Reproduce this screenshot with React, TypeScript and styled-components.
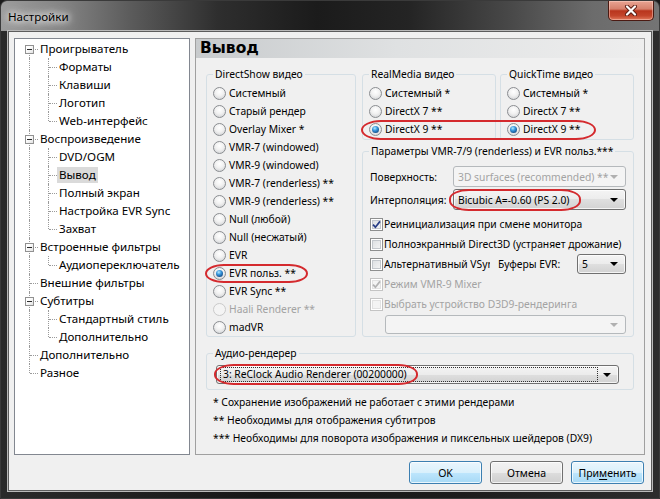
import styled, { createGlobalStyle } from 'styled-components';

const FONT = `"Noto Sans", "Liberation Sans", sans-serif`;

const GlobalStyle = createGlobalStyle`
  html, body {
    margin: 0;
    padding: 0;
    background: #1b1b1b;
  }
  body {
    font-family: ${FONT};
    font-size: 10.3px;
    color: #000;
  }
  * {
    box-sizing: border-box;
  }
`;

const Window = styled.div`
  width: 660px;
  height: 499px;
  display: flex;
  flex-direction: column;
  background: linear-gradient(90deg, #2a2a2a 0%, #161616 40%, #1c1c1c 70%, #2c2c2c 100%);
  border: 1px solid #3a3a3a;
  border-radius: 7px 7px 0 0;
  overflow: hidden;
`;

const TitleBar = styled.div`
  height: 30px;
  flex: none;
  display: flex;
  align-items: flex-start;
  padding-left: 7px;
  background: linear-gradient(
    90deg,
    #9c9c9c 0%,
    #858585 9%,
    #5a5a5a 20%,
    #2e2e2e 33%,
    #1b1b1b 48%,
    #242424 62%,
    #4a4a4a 78%,
    #6c6c6c 90%,
    #747474 100%
  );
`;

const Title = styled.span`
  margin-top: 8px;
  font-size: 11.6px;
  color: #000;
  text-shadow: 0 0 6px #fff, 0 0 10px #fff, 0 0 14px rgba(255, 255, 255, 0.8);
`;

const CloseButton = styled.div`
  margin-left: auto;
  margin-right: 5px;
  width: 46px;
  height: 20px;
  display: flex;
  align-items: center;
  justify-content: center;
  border: 1px solid #4b1a12;
  border-top: none;
  border-radius: 0 0 5px 5px;
  background: linear-gradient(#e9a493 0%, #d6806c 42%, #b9351d 52%, #c3452b 78%, #e27a5d 100%);
  box-shadow: inset 0 0 0 1px rgba(255, 220, 210, 0.45);
`;

const Client = styled.div`
  flex: 1;
  min-height: 0;
  margin: 0 7px 7px;
  display: flex;
  flex-direction: column;
  gap: 6px;
  padding: 6px 7px 6px 5px;
  background: #f0f0f0;
  border: 1px solid #5c5c5c;
  box-shadow: 0 0 0 1px #b9b9b9;
`;

const Main = styled.div`
  flex: 1;
  min-height: 0;
  display: flex;
  gap: 5px;
`;

/* ---------- tree ---------- */

const Tree = styled.div`
  width: 176px;
  flex: none;
  padding: 1px 0 0 4px;
  font-size: 11.6px;
  background: #fff;
  border: 1px solid #828790;
`;

const TreeRow = styled.div`
  display: flex;
  align-items: center;
  height: 18px;
  white-space: nowrap;
`;

type Line = 'full' | 'top' | 'bottom' | 'none';

const Gutter = styled.span<{ $v: Line; $h?: boolean }>`
  position: relative;
  width: 19px;
  height: 18px;
  flex: none;
  &::before {
    content: '';
    display: ${(p) => (p.$v === 'none' ? 'none' : 'block')};
    position: absolute;
    left: 10px;
    top: ${(p) => (p.$v === 'bottom' ? '9px' : '0')};
    bottom: ${(p) => (p.$v === 'top' ? '9px' : '0')};
    border-left: 1px dotted #9a9a9a;
  }
  &::after {
    content: '';
    display: ${(p) => (p.$h ? 'block' : 'none')};
    position: absolute;
    left: 11px;
    top: 9px;
    width: 8px;
    border-top: 1px dotted #9a9a9a;
  }
`;

const ExpandBox = styled.span`
  position: absolute;
  z-index: 1;
  left: 6px;
  top: 5px;
  width: 9px;
  height: 9px;
  border: 1px solid #919191;
  background: linear-gradient(135deg, #ffffff 30%, #e2e2e2 100%);
  &::after {
    content: '';
    position: absolute;
    left: 1px;
    top: 3px;
    width: 5px;
    height: 1px;
    background: #2b2b2b;
  }
`;

const TreeLabel = styled.span<{ $selected?: boolean }>`
  padding: 0 2px;
  line-height: 16px;
  background: ${(p) => (p.$selected ? '#dadada' : 'transparent')};
`;

/* ---------- page ---------- */

const Page = styled.div`
  flex: 1;
  display: flex;
  flex-direction: column;
  border: 1px solid #a0a0a0;
`;

const PageHeader = styled.div`
  height: 19px;
  flex: none;
  padding-left: 4px;
  font: bold 15.5px "DejaVu Sans", sans-serif;
  line-height: 19px;
  background: linear-gradient(90deg, #c8cbcd 0%, #dfe1e2 45%, #eeeeee 100%);
`;

const PageBody = styled.div`
  padding: 8px 10px 0 10px;
  display: flex;
  flex-direction: column;
`;

const TopGrid = styled.div`
  display: grid;
  grid-template-columns: 150px 272px;
  column-gap: 6px;
`;

const RightColumn = styled.div`
  display: flex;
  flex-direction: column;
  gap: 3px;
`;

const MediaRow = styled.div`
  position: relative;
  display: grid;
  grid-template-columns: 1fr 1fr;
  column-gap: 4px;
`;

const Group = styled.fieldset<{ $grow?: boolean }>`
  margin: 0;
  padding: 0;
  min-width: 0;
  border: 1px solid #d5dfe5;
  border-radius: 3px;
  flex: ${(p) => (p.$grow ? 1 : 'none')};
`;

const Legend = styled.legend`
  margin-left: 6px;
  padding: 0 2px;
  font-size: 10.3px;
  line-height: 16px;
  white-space: nowrap;
`;

const GroupContent = styled.div<{ $pad: string }>`
  padding: ${(p) => p.$pad};
  display: flex;
  flex-direction: column;
`;

const OptionRow = styled.div<{ $disabled?: boolean; $h?: number }>`
  position: relative;
  display: flex;
  align-items: center;
  height: ${(p) => p.$h ?? 18}px;
  gap: 3px;
  white-space: nowrap;
  color: ${(p) => (p.$disabled ? '#a3a3a3' : '#000')};
`;

const RadioDot = styled.span<{ $checked?: boolean; $disabled?: boolean }>`
  position: relative;
  width: 13px;
  height: 13px;
  flex: none;
  border-radius: 50%;
  border: 1px solid ${(p) => (p.$disabled ? '#cacaca' : '#8a8d91')};
  background: ${(p) =>
    p.$disabled
      ? '#f4f4f4'
      : 'radial-gradient(circle at 50% 35%, #ffffff 0%, #f1f1f1 45%, #c9cbce 100%)'};
  &::after {
    content: '';
    display: ${(p) => (p.$checked ? 'block' : 'none')};
    position: absolute;
    left: 2px;
    top: 2px;
    width: 7px;
    height: 7px;
    border-radius: 50%;
    background: radial-gradient(circle at 40% 32%, #b6ecff 0%, #3c9be0 35%, #14528f 75%, #0c3766 100%);
  }
`;

const CheckSquare = styled.span<{ $disabled?: boolean }>`
  width: 13px;
  height: 13px;
  flex: none;
  display: flex;
  align-items: center;
  justify-content: center;
  border: 1px solid ${(p) => (p.$disabled ? '#c4c4c4' : '#8e8f8f')};
  box-shadow: inset 0 0 0 1px #fff, inset 0 0 0 2px ${(p) => (p.$disabled ? '#e2e2e2' : '#c3c7cc')};
  background: ${(p) => (p.$disabled ? '#f4f4f4' : 'linear-gradient(135deg, #d9dcdf 0%, #f7f7f7 100%)')};
`;

const CheckText = styled.span`
  margin-left: -2px;
`;

const ClipText = styled.span`
  width: 106px;
  overflow: hidden;
  margin-left: -2px;
`;

const SideLabel = styled.span`
  margin-left: 5px;
`;

const FieldGrid = styled.div`
  display: grid;
  grid-template-columns: 83px 173px;
  grid-auto-rows: 21px;
  row-gap: 2px;
  align-items: center;
`;

const Checks = styled.div`
  margin-top: 4px;
  display: flex;
  flex-direction: column;
`;

const Combo = styled.div<{ $disabled?: boolean; $w?: number; $h?: number; $indent?: number }>`
  position: relative;
  display: flex;
  align-items: center;
  height: ${(p) => p.$h ?? 21}px;
  width: ${(p) => (p.$w ? `${p.$w}px` : 'auto')};
  margin-left: ${(p) => (p.$indent !== undefined ? `${p.$indent}px` : '0')};
  padding: 0 20px 0 4px;
  white-space: nowrap;
  border: 1px solid ${(p) => (p.$disabled ? '#b5b9bc' : '#707070')};
  border-radius: 3px;
  color: ${(p) => (p.$disabled ? '#a3a3a3' : '#000')};
  background: ${(p) =>
    p.$disabled
      ? '#f4f4f4'
      : 'linear-gradient(#f4f4f4 0%, #ececec 50%, #dfdfdf 50%, #d2d2d2 100%)'};
  box-shadow: ${(p) => (p.$disabled ? 'none' : 'inset 0 0 0 1px rgba(255,255,255,0.75)')};
  &::after {
    content: '';
    position: absolute;
    right: 7px;
    top: 50%;
    margin-top: -2px;
    border-left: 4px solid transparent;
    border-right: 4px solid transparent;
    border-top: 4px solid ${(p) => (p.$disabled ? '#b0b0b0' : '#000')};
  }
`;

const FocusRect = styled.span`
  flex: 1;
  margin-left: -1px;
  padding-left: 2px;
  line-height: 13px;
  border: 1px dotted #303030;
`;

const NextCombo = styled(Combo)`
  margin-left: auto;
`;

const AudioGroup = styled(Group)`
  margin-top: 8px;
`;

const Notes = styled.div`
  margin: 3px 0 0 7px;
  display: flex;
  flex-direction: column;
`;

const Note = styled.div`
  height: 18px;
  line-height: 18px;
  white-space: nowrap;
`;

const Mark = styled.span<{ $l: number; $t: number; $w: number; $h: number }>`
  position: absolute;
  z-index: 2;
  left: ${(p) => p.$l}px;
  top: ${(p) => p.$t}px;
  width: ${(p) => p.$w}px;
  height: ${(p) => p.$h}px;
  border: 2px solid #d42a2e;
  border-radius: 20px / 10px;
  pointer-events: none;
`;

/* ---------- buttons ---------- */

const ButtonRow = styled.div`
  flex: none;
  display: flex;
  justify-content: flex-end;
  gap: 8px;
`;

const DialogButton = styled.button<{ $accent?: boolean }>`
  width: 73px;
  height: 23px;
  padding: 0;
  font: 10.5px ${FONT};
  color: #000;
  border-radius: 3px;
  border: 1px solid ${(p) => (p.$accent ? '#3c7fb1' : '#707070')};
  background: ${(p) =>
    p.$accent
      ? 'linear-gradient(#eaf6fd 0%, #d9f0fc 50%, #bee6fd 50%, #a7d9f5 100%)'
      : 'linear-gradient(#f2f2f2 0%, #ebebeb 50%, #dddddd 50%, #cfcfcf 100%)'};
  box-shadow: inset 0 0 0 1px rgba(255, 255, 255, 0.75);
  u {
    text-decoration: underline;
    text-underline-offset: 2px;
  }
`;

/* ---------- data ---------- */

type TreeItem = {
  label: string;
  level: 1 | 2;
  box?: boolean;
  first?: boolean;
  last?: boolean;
  selected?: boolean;
};

const treeItems: TreeItem[] = [
  { label: 'Проигрыватель', level: 1, box: true, first: true },
  { label: 'Форматы', level: 2 },
  { label: 'Клавиши', level: 2 },
  { label: 'Логотип', level: 2 },
  { label: 'Web-интерфейс', level: 2, last: true },
  { label: 'Воспроизведение', level: 1, box: true },
  { label: 'DVD/OGM', level: 2 },
  { label: 'Вывод', level: 2, selected: true },
  { label: 'Полный экран', level: 2 },
  { label: 'Настройка EVR Sync', level: 2 },
  { label: 'Захват', level: 2, last: true },
  { label: 'Встроенные фильтры', level: 1, box: true },
  { label: 'Аудиопереключатель', level: 2, last: true },
  { label: 'Внешние фильтры', level: 1 },
  { label: 'Субтитры', level: 1, box: true },
  { label: 'Стандартный стиль', level: 2 },
  { label: 'Дополнительно', level: 2, last: true },
  { label: 'Дополнительно', level: 1 },
  { label: 'Разное', level: 1, last: true },
];

type Option = { label: string; checked?: boolean; disabled?: boolean };

const directShow: Option[] = [
  { label: 'Системный' },
  { label: 'Старый рендер' },
  { label: 'Overlay Mixer *' },
  { label: 'VMR-7 (windowed)' },
  { label: 'VMR-9 (windowed)' },
  { label: 'VMR-7 (renderless) **' },
  { label: 'VMR-9 (renderless) **' },
  { label: 'Null (любой)' },
  { label: 'Null (несжатый)' },
  { label: 'EVR' },
  { label: 'EVR польз. **', checked: true },
  { label: 'EVR Sync **' },
  { label: 'Haali Renderer **', disabled: true },
  { label: 'madVR' },
];

const mediaOptions: Option[] = [
  { label: 'Системный *' },
  { label: 'DirectX 7 **' },
  { label: 'DirectX 9 **', checked: true },
];

function CloseGlyph() {
  return (
    <svg width="14" height="11" viewBox="0 0 14 11">
      <path d="M3 1.5 L11 9.5 M11 1.5 L3 9.5" stroke="#5a1c12" strokeWidth="4" strokeLinecap="round" />
      <path d="M3 1.5 L11 9.5 M11 1.5 L3 9.5" stroke="#fff" strokeWidth="2.2" strokeLinecap="round" />
    </svg>
  );
}

function CheckMark({ disabled }: { disabled?: boolean }) {
  return (
    <svg width="9" height="9" viewBox="0 0 9 9">
      <path
        d="M1 4.6 L3.4 7.2 L8 1.4"
        fill="none"
        stroke={disabled ? '#b4b4b4' : '#2a3f86'}
        strokeWidth="1.7"
      />
    </svg>
  );
}

function Radio({ label, checked, disabled }: Option) {
  return (
    <OptionRow $disabled={disabled}>
      <RadioDot $checked={checked} $disabled={disabled} />
      {label}
    </OptionRow>
  );
}

function Check({ label, checked, disabled }: Option) {
  return (
    <OptionRow $h={20} $disabled={disabled}>
      <CheckSquare $disabled={disabled}>{checked && <CheckMark disabled={disabled} />}</CheckSquare>
      <CheckText>{label}</CheckText>
    </OptionRow>
  );
}

function TreeNode({ item }: { item: TreeItem }) {
  if (item.level === 1) {
    const v: Line = item.first ? 'bottom' : item.last ? 'top' : 'full';
    return (
      <TreeRow>
        <Gutter $v={v} $h>
          {item.box && <ExpandBox />}
        </Gutter>
        <TreeLabel>{item.label}</TreeLabel>
      </TreeRow>
    );
  }
  return (
    <TreeRow>
      <Gutter $v="full" />
      <Gutter $v={item.last ? 'top' : 'full'} $h />
      <TreeLabel $selected={item.selected}>{item.label}</TreeLabel>
    </TreeRow>
  );
}

export default function App() {
  return (
    <>
      <GlobalStyle />
      <Window>
        <TitleBar>
          <Title>Настройки</Title>
          <CloseButton>
            <CloseGlyph />
          </CloseButton>
        </TitleBar>
        <Client>
          <Main>
            <Tree>
              {treeItems.map((item, i) => (
                <TreeNode key={i} item={item} />
              ))}
            </Tree>
            <Page>
              <PageHeader>Вывод</PageHeader>
              <PageBody>
                <TopGrid>
                  <Group>
                    <Legend>DirectShow видео</Legend>
                    <GroupContent $pad="2px 0 0 6px">
                      {directShow.map((o) => (
                        <OptionRow key={o.label} $disabled={o.disabled}>
                          <RadioDot $checked={o.checked} $disabled={o.disabled} />
                          {o.label}
                          {o.checked && <Mark $l={-8} $t={0} $w={103} $h={19} />}
                        </OptionRow>
                      ))}
                    </GroupContent>
                  </Group>
                  <RightColumn>
                    <MediaRow>
                      <Group>
                        <Legend>RealMedia видео</Legend>
                        <GroupContent $pad="2px 0 1px 6px">
                          {mediaOptions.map((o) => (
                            <Radio key={o.label} {...o} />
                          ))}
                        </GroupContent>
                      </Group>
                      <Group>
                        <Legend>QuickTime видео</Legend>
                        <GroupContent $pad="2px 0 1px 6px">
                          {mediaOptions.map((o) => (
                            <Radio key={o.label} {...o} />
                          ))}
                        </GroupContent>
                      </Group>
                      <Mark $l={-1} $t={54} $w={235} $h={20} />
                    </MediaRow>
                    <Group $grow>
                      <Legend>Параметры VMR-7/9 (renderless) и EVR польз.***</Legend>
                      <GroupContent $pad="7px 7px 2px 7px">
                        <FieldGrid>
                          <span>Поверхность:</span>
                          <Combo $disabled>3D surfaces (recommended) **</Combo>
                          <span>Интерполяция:</span>
                          <Combo>
                            Bicubic A=-0.60 (PS 2.0)
                            <Mark $l={-5} $t={-1} $w={132} $h={22} />
                          </Combo>
                        </FieldGrid>
                        <Checks>
                          <Check label="Реинициализация при смене монитора" checked />
                          <Check label="Полноэкранный Direct3D (устраняет дрожание)" />
                          <OptionRow $h={20}>
                            <CheckSquare />
                            <ClipText>Альтернативный VSync</ClipText>
                            <SideLabel>Буферы EVR:</SideLabel>
                            <NextCombo $w={49} $h={20}>
                              5
                            </NextCombo>
                          </OptionRow>
                          <Check label="Режим VMR-9 Mixer" checked disabled />
                          <Check label="Выбрать устройство D3D9-рендеринга" disabled />
                        </Checks>
                        <Combo $disabled $h={19} $indent={15} style={{ marginTop: 1 }} />
                      </GroupContent>
                    </Group>
                  </RightColumn>
                </TopGrid>
                <AudioGroup>
                  <Legend>Аудио-рендерер</Legend>
                  <GroupContent $pad="4px 14px 5px 9px">
                    <Combo $h={19}>
                      <FocusRect>3: ReClock Audio Renderer (00200000)</FocusRect>
                      <Mark $l={-3} $t={-2} $w={204} $h={21} />
                    </Combo>
                  </GroupContent>
                </AudioGroup>
                <Notes>
                  <Note>* Сохранение изображений не работает с этими рендерами</Note>
                  <Note>** Необходимы для отображения субтитров</Note>
                  <Note>*** Необходимы для поворота изображения и пиксельных шейдеров (DX9)</Note>
                </Notes>
              </PageBody>
            </Page>
          </Main>
          <ButtonRow>
            <DialogButton $accent>OK</DialogButton>
            <DialogButton>Отмена</DialogButton>
            <DialogButton $accent>
              При<u>м</u>енить
            </DialogButton>
          </ButtonRow>
        </Client>
      </Window>
    </>
  );
}
